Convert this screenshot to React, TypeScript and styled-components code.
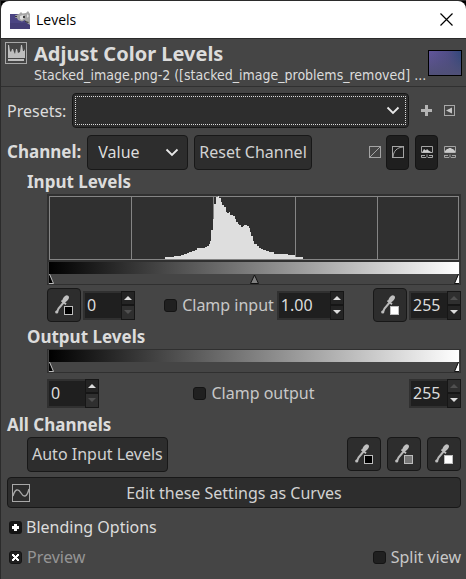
import React, { useState } from 'react';
import styled, { createGlobalStyle, css } from 'styled-components';

const UI = '"Noto Sans", sans-serif';

const Global = createGlobalStyle`
  * { box-sizing: border-box; }
  body { margin: 0; background: #454545; color: #dcdcdc; font: 16px/20px ${UI}; }
  button, input, select { font: inherit; color: inherit; margin: 0; }
  svg { display: block; flex: none; }
`;

const Window = styled.main`
  border-top: 1px solid #2b2b2b;
  border-left: 1px solid #2b2b2b;
  min-height: 100vh;
  background: #454545;
`;

const TitleBar = styled.header`
  display: flex;
  align-items: center;
  gap: 5px;
  height: 38px;
  padding: 0 13px 0 9px;
  background: #fff;
  color: #000;
  border-bottom: 1px solid #2b2b2b;
  border-radius: 8px 8px 0 0;
  font: 14px/20px "Open Sans", sans-serif;
`;

const Corner = styled.div`
  background: #000;
`;

const CloseButton = styled.button`
  margin-left: auto;
  padding: 0;
  border: 0;
  background: none;
`;

const Banner = styled.section`
  display: flex;
  align-items: center;
  height: 48px;
  padding: 0 4px;
  border-bottom: 1px solid #303030;
`;

const BannerIcon = styled.div`
  align-self: flex-start;
  padding-top: 3px;
  width: 29px;
`;

const BannerText = styled.div`
  flex: 1;
  min-width: 0;
  white-space: nowrap;
`;

const Title = styled.h1`
  margin: 0;
  font-size: 20px;
  line-height: 24px;
`;

const Subtitle = styled.p`
  margin: 0;
  font: 14px/18px "DejaVu Sans Condensed", "DejaVu Sans", sans-serif;
`;

const Body = styled.div`
  display: flex;
  flex-direction: column;
  padding: 6px 5px 12px 6px;
`;

const Row = styled.div<{ $indent?: number; $height: number; $top?: number }>`
  display: flex;
  align-items: center;
  justify-content: space-between;
  height: ${p => p.$height}px;
  margin-top: ${p => p.$top ?? 0}px;
  padding-left: ${p => p.$indent ?? 0}px;
`;

const Group = styled.div<{ $gap: number; $end?: number }>`
  display: flex;
  align-items: center;
  gap: ${p => p.$gap}px;
  padding-right: ${p => p.$end ?? 0}px;
`;

const Heading = styled.h2<{ $indent?: boolean }>`
  margin: 0;
  padding-left: ${p => (p.$indent ? 20 : 0)}px;
  font-size: 17px;
  line-height: 24px;
`;

const BoldLabel = styled.label`
  font-size: 17px;
  font-weight: 700;
`;

const raised = css`
  background: #2d2d2d;
  border: 1px solid #181818;
  border-radius: 4px;
`;

const SelectBox = styled.div<{ $wide?: boolean }>`
  position: relative;
  display: flex;
  ${p => (p.$wide ? 'flex: 1; margin: 0 12px 0 6px;' : 'width: 101px;')}
  height: 35px;
  > svg { position: absolute; right: ${p => (p.$wide ? 9 : 9)}px; top: 13px; pointer-events: none; }
`;

const Select = styled.select<{ $ring?: boolean }>`
  ${raised}
  appearance: none;
  width: 100%;
  padding: 0 30px 0 10px;
  outline: ${p => (p.$ring ? '1px dotted #dcdcdc' : 'none')};
  outline-offset: -4px;
`;

const Button = styled.button`
  ${raised}
  height: 35px;
  padding: 0 4px;
  white-space: nowrap;
  color: #d2d2d2;
`;

const PickButton = styled(Button)`
  display: flex;
  align-items: center;
  justify-content: center;
  width: 34px;
  height: 34px;
  padding: 0;
`;

const WideButton = styled(Button)`
  display: grid;
  grid-template-columns: 18px 1fr 18px;
  align-items: center;
  height: 31px;
  margin-top: 6px;
`;

const FlatButton = styled.button`
  padding: 0;
  border: 0;
  background: none;
`;

const Toggle = styled.button<{ $on?: boolean }>`
  display: flex;
  align-items: center;
  justify-content: center;
  width: 23px;
  height: 35px;
  padding: 0;
  border: 1px solid ${p => (p.$on ? '#151515' : 'transparent')};
  border-radius: 4px;
  background: ${p => (p.$on ? '#1f1f1f' : 'none')};
`;

const Well = styled.div`
  margin: 0 0 0 40px;
  border: 1px solid #303030;
  padding: 0 1px;
`;

const HistogramFrame = styled.div`
  margin: 0 -1px;
  padding: 1px 1px 2px;
  background: #303030;
  svg { width: 100%; height: 64px; }
`;

const Gradient = styled.div`
  height: 12px;
  background: linear-gradient(to right, #000, #fff);
`;

const Handles = styled.div`
  display: flex;
  justify-content: space-between;
  height: 10px;
`;

const Spin = styled.div<{ $width: number }>`
  display: flex;
  width: ${p => p.$width}px;
  height: 29px;
  background: #1f1f1f;
  border: 2px solid #303030;
  border-width: 2px 0 2px 2px;
`;

const SpinInput = styled.input`
  flex: 1;
  min-width: 0;
  padding: 0 0 0 2px;
  border: 0;
  outline: 0;
  background: none;
`;

const SpinSteps = styled.div`
  display: grid;
  grid-template-rows: 1fr 1fr;
  width: 14px;
  margin: -2px 0;
`;

const Step = styled.button`
  display: flex;
  align-items: center;
  justify-content: center;
  padding: 0;
  border: 1px solid #161616;
  background: #242424;
  color: #dcdcdc;
  &:disabled { background: #2f2f2f; color: #505050; }
`;

const CheckLabel = styled.label<{ $dim?: boolean }>`
  display: flex;
  align-items: center;
  gap: 5px;
  white-space: nowrap;
  color: ${p => (p.$dim ? '#959595' : '#c8c8c8')};
`;

const Check = styled.input`
  appearance: none;
  display: grid;
  place-items: center;
  width: 13px;
  height: 13px;
  border: 1px solid #141414;
  border-radius: 3px;
  background: #202020;
  &:checked::before {
    content: '';
    width: 7px;
    height: 7px;
    background:
      linear-gradient(45deg, transparent 38%, #fff 38% 62%, transparent 62%),
      linear-gradient(-45deg, transparent 38%, #fff 38% 62%, transparent 62%);
  }
`;

const Expander = styled.button`
  display: flex;
  align-items: center;
  gap: 4px;
  padding: 0;
  border: 0;
  background: none;
`;

const Chevron = () => (
  <svg width="14" height="9" viewBox="0 0 14 9" fill="none" stroke="#e8e8e8" strokeWidth="1.8"><path d="M1.5 1.5 7 7l5.5-5.5" /></svg>
);

const Picker = ({ fill, label }: { fill: string; label: string }) => (
  <PickButton type="button" aria-label={label}>
    <svg width="18" height="20" viewBox="0 0 18 20">
      <path d="M2 17 3.5 13.5 9 7" fill="none" stroke="#b8b8b8" strokeWidth="2" />
      <circle cx="1.7" cy="17" r="1.6" fill="#bdbdbd" />
      <path d="M6.500 5.500 11 9.200" stroke="#bdbdbd" strokeWidth="1.8" />
      <ellipse cx="10.7" cy="3.800" rx="2.500" ry="4" transform="rotate(38 10.7 3.8)" fill="#c0c0c0" />
      <rect x="9.500" y="11.500" width="8" height="8" fill={fill} stroke="#bdbdbd" />
    </svg>
  </PickButton>
);

function SpinBox({ label, value, width, down = true, up = true }: { label: string; value: string; width: number; down?: boolean; up?: boolean }) {
  const [text, setText] = useState(value);
  return (
    <Spin $width={width}>
      <SpinInput aria-label={label} value={text} onChange={e => setText(e.target.value)} />
      <SpinSteps>
        <Step type="button" aria-label={`Increase ${label}`} disabled={!up}>
          <svg width="8" height="4" viewBox="0 0 8 4"><path d="M0 4 4 0l4 4z" fill="currentColor" /></svg>
        </Step>
        <Step type="button" aria-label={`Decrease ${label}`} disabled={!down}>
          <svg width="8" height="4" viewBox="0 0 8 4"><path d="M0 0 4 4l4-4z" fill="currentColor" /></svg>
        </Step>
      </SpinSteps>
    </Spin>
  );
}

const LowHandle = () => (
  <svg width="5" height="10" viewBox="0 0 5 10"><path d="M0 0v9.5h4.5z" fill="#000" /><path d="M.5 0 4.5 9.5H0" fill="none" stroke="#bbb" /></svg>
);
const MidHandle = () => (
  <svg width="9" height="10" viewBox="0 0 9 10"><path d="M4.5 1 8.5 9.5h-8z" fill="#808080" stroke="#111" /></svg>
);
const HighHandle = () => (
  <svg width="5" height="10" viewBox="0 0 5 10"><path d="M5 0v9.5H.5z" fill="#fff" /><path d="M4.5 0 .5 9.5H5" fill="none" stroke="#111" /></svg>
);

const LEVELS: [number, number][] = [
  [116, 2], [125, 3], [132, 4], [135, 5], [138, 6], [140, 7], [143, 8], [146, 9], [148, 11], [156, 12], [158, 13],
  [160, 15], [161, 18], [162, 29], [164, 40], [165, 55], [167, 62], [169, 63], [170, 61], [172, 57], [173, 54],
  [175, 52], [177, 47], [178, 46], [180, 47], [181, 44], [184, 43], [186, 40], [187, 37], [189, 35], [190, 34],
  [192, 32], [194, 33], [195, 34], [198, 33], [200, 31], [201, 27], [202, 23], [204, 18], [205, 15], [208, 13],
  [210, 11], [212, 10], [214, 9], [217, 8], [220, 7], [225, 5], [239, 4], [246, 2], [254, 0],
];
const HISTOGRAM = `M116 63${LEVELS.map(([x, h]) => `H${x}V${63 - h}`).join('')}V63z`;

export default function App() {
  return (
    <Window>
      <Global />
      <Corner>
        <TitleBar>
          <svg width="21" height="20" viewBox="0 0 21 20">
            <path d="M0 4h20v15H0z" fill="#4b4583" />
            <path d="M0 13h20v6H0z" fill="#403b70" opacity=".6" />
            <path d="M5 5.500 9 4l2-2 1.500 1.500L16 3l2-2 2 3v11l-3-2-2-3-3 1.500-4-1.500-1-2-2-.500z" fill="#a5a5a5" />
            <path d="m10 6 3-1 2 2-3 3-2-1zM17 4l2 2-2 2z" fill="#dedede" />
            <path d="M13 6h2v2h-2zM5 6h2v1H5zM15 11l4 1-1 1-3-1z" fill="#3b3b3b" />
          </svg>
          <span>Levels</span>
          <CloseButton type="button" aria-label="Close">
            <svg width="13" height="13" viewBox="0 0 13 13" stroke="#000" strokeWidth="1.2"><path d="M.5.5l12 12M12.5.5l-12 12" /></svg>
          </CloseButton>
        </TitleBar>
      </Corner>

      <Banner>
        <BannerIcon>
          <svg width="22" height="22" viewBox="0 0 22 22">
            <rect x=".5" y=".5" width="21" height="21" fill="none" stroke="#a8a8a8" />
            <path d="M3 16V3h1l1 6 1 1 1-3h1l1 3 1 2 1-5h1l1 4 2-1 1-7h1l1 6h1l1-2v9zM3 17h16v2H3z" fill="#bebebe" />
          </svg>
        </BannerIcon>
        <BannerText>
          <Title>Adjust Color Levels</Title>
          <Subtitle>Stacked_image.png-2 ([stacked_image_problems_removed] ...</Subtitle>
        </BannerText>
        <svg width="34" height="26" viewBox="0 0 34 26">
          <defs>
            <linearGradient id="sky" x1="0" y1="0" x2="1" y2="0"><stop offset="0" stopColor="#62559c" /><stop offset=".6" stopColor="#504d88" /><stop offset="1" stopColor="#30487c" /></linearGradient>
            <linearGradient id="shade" x1="0" y1="0" x2="0" y2="1"><stop offset="0" stopColor="#505077" stopOpacity="0" /><stop offset="1" stopColor="#505077" /></linearGradient>
          </defs>
          <rect x="1" y="1" width="32" height="24" fill="url(#sky)" />
          <rect x="1" y="1" width="32" height="24" fill="url(#shade)" />
          <rect x=".5" y=".5" width="33" height="25" fill="none" stroke="#000" />
        </svg>
      </Banner>

      <Body>
        <Row $height={35}>
          <label htmlFor="presets">Presets:</label>
          <SelectBox $wide>
            <Select id="presets" $ring defaultValue=""><option value="" /></Select>
            <Chevron />
          </SelectBox>
          <Group $gap={12} $end={6}>
            <FlatButton type="button" aria-label="Add preset">
              <svg width="11" height="11" viewBox="0 0 11 11"><path d="M4 0h3v4h4v3H7v4H4V7H0V4h4z" fill="#b4b4b4" /></svg>
            </FlatButton>
            <FlatButton type="button" aria-label="Preset menu">
              <svg width="11" height="11" viewBox="0 0 11 11"><rect x=".5" y=".5" width="10" height="10" fill="none" stroke="#a8a8a8" /><path d="M2 5.5 8 2.5v6z" fill="#c4c4c4" /></svg>
            </FlatButton>
          </Group>
        </Row>

        <Row $height={36} $top={6}>
          <Group $gap={6}>
            <BoldLabel htmlFor="channel">Channel:</BoldLabel>
            <SelectBox>
              <Select id="channel" defaultValue="Value"><option>Value</option></Select>
              <Chevron />
            </SelectBox>
            <Button type="button">Reset Channel</Button>
          </Group>
          <Group $gap={6}>
            <Group $gap={0}>
              <Toggle type="button" aria-label="Linear histogram">
                <svg width="12" height="12" viewBox="0 0 12 12" fill="none" stroke="#a4a4a4"><rect x=".5" y=".5" width="11" height="11" /><path d="M1 11 11 1" /></svg>
              </Toggle>
              <Toggle type="button" $on aria-label="Logarithmic histogram">
                <svg width="12" height="12" viewBox="0 0 12 12" fill="none" stroke="#a4a4a4"><rect x=".5" y=".5" width="11" height="11" /><path d="M1 11C1.5 5 5 1.500 11 1" /></svg>
              </Toggle>
            </Group>
            <Group $gap={0}>
              <Toggle type="button" $on aria-label="Gamma histogram">
                <svg width="12" height="12" viewBox="0 0 12 12" fill="none" stroke="#a4a4a4"><path d="M.5.5h11v6H.5zM.5 9v2.500H5M7 11.500h4.500V9M0 9.500h4M8 9.500h4M6 8.500v3" /><path d="M1 6.500 3 3l2 1.500L6 3l1.500 1.500 3.500 2z" fill="#ccc" stroke="none" /></svg>
              </Toggle>
              <Toggle type="button" aria-label="Linear light histogram">
                <svg width="12" height="12" viewBox="0 0 12 12" fill="none" stroke="#a4a4a4"><path d="M.5.5h11v6H.5zM.5 9v2.500H5M7 11.500h4.500V9M0 9.500h4M8 9.500h4M6 8.500v3" /><path d="M1 6.500V5l2-2h1l1-1h2l1 1h1l2 2v1.500z" fill="#ccc" stroke="none" /></svg>
              </Toggle>
            </Group>
          </Group>
        </Row>

        <Heading $indent>Input Levels</Heading>
        <Well>
          <HistogramFrame>
            <svg viewBox="0 0 410 64" preserveAspectRatio="none" shapeRendering="crispEdges">
              <path d="M.5.5h409v63H.5zM82.5 0v64M164.5 0v64M246.5 0v64M328.5 0v64" fill="none" stroke="#858585" />
              <path d={HISTOGRAM} fill="#dedede" />
            </svg>
          </HistogramFrame>
          <Gradient />
          <Handles><LowHandle /><MidHandle /><HighHandle /></Handles>
        </Well>

        <Row $height={40} $indent={40}>
          <Group $gap={2}><Picker fill="#000" label="Pick black point" /><SpinBox label="low input" value="0" width={52} down={false} /></Group>
          <Group $gap={3}>
            <CheckLabel><Check type="checkbox" />Clamp input</CheckLabel>
            <SpinBox label="gamma" value="1.00" width={67} />
          </Group>
          <Group $gap={2}><Picker fill="#fff" label="Pick white point" /><SpinBox label="high input" value="255" width={52} up={false} /></Group>
        </Row>

        <Heading $indent>Output Levels</Heading>
        <Well>
          <Gradient />
          <Handles><LowHandle /><HighHandle /></Handles>
        </Well>

        <Row $height={40} $indent={40}>
          <SpinBox label="low output" value="0" width={52} down={false} />
          <CheckLabel><Check type="checkbox" />Clamp output</CheckLabel>
          <SpinBox label="high output" value="255" width={52} up={false} />
        </Row>

        <Heading>All Channels</Heading>
        <Row $height={34} $indent={20}>
          <Button type="button">Auto Input Levels</Button>
          <Group $gap={6}>
            <Picker fill="#000" label="Pick black point for all channels" />
            <Picker fill="#777" label="Pick gray point for all channels" />
            <Picker fill="#fff" label="Pick white point for all channels" />
          </Group>
        </Row>

        <WideButton type="button">
          <svg width="18" height="18" viewBox="0 0 18 18" fill="none" stroke="#a8a8a8"><rect x=".5" y=".5" width="17" height="17" /><path d="M1 12C3 5 6 4 9 9s6 4 8-4" strokeWidth="1.4" /></svg>
          <span>Edit these Settings as Curves</span>
        </WideButton>

        <Row $height={38} $indent={2}>
          <Expander type="button" aria-expanded={false}>
            <svg width="13" height="13" viewBox="0 0 13 13"><rect width="13" height="13" rx="3" fill="#141414" /><path d="M5 3h3v2h2v3H8v2H5V8H3V5h2z" fill="#fff" /></svg>
            Blending Options
          </Expander>
        </Row>
        <Row $height={22} $indent={2}>
          <CheckLabel $dim><Check type="checkbox" defaultChecked />Preview</CheckLabel>
          <CheckLabel><Check type="checkbox" />Split view</CheckLabel>
        </Row>
      </Body>
    </Window>
  );
}
